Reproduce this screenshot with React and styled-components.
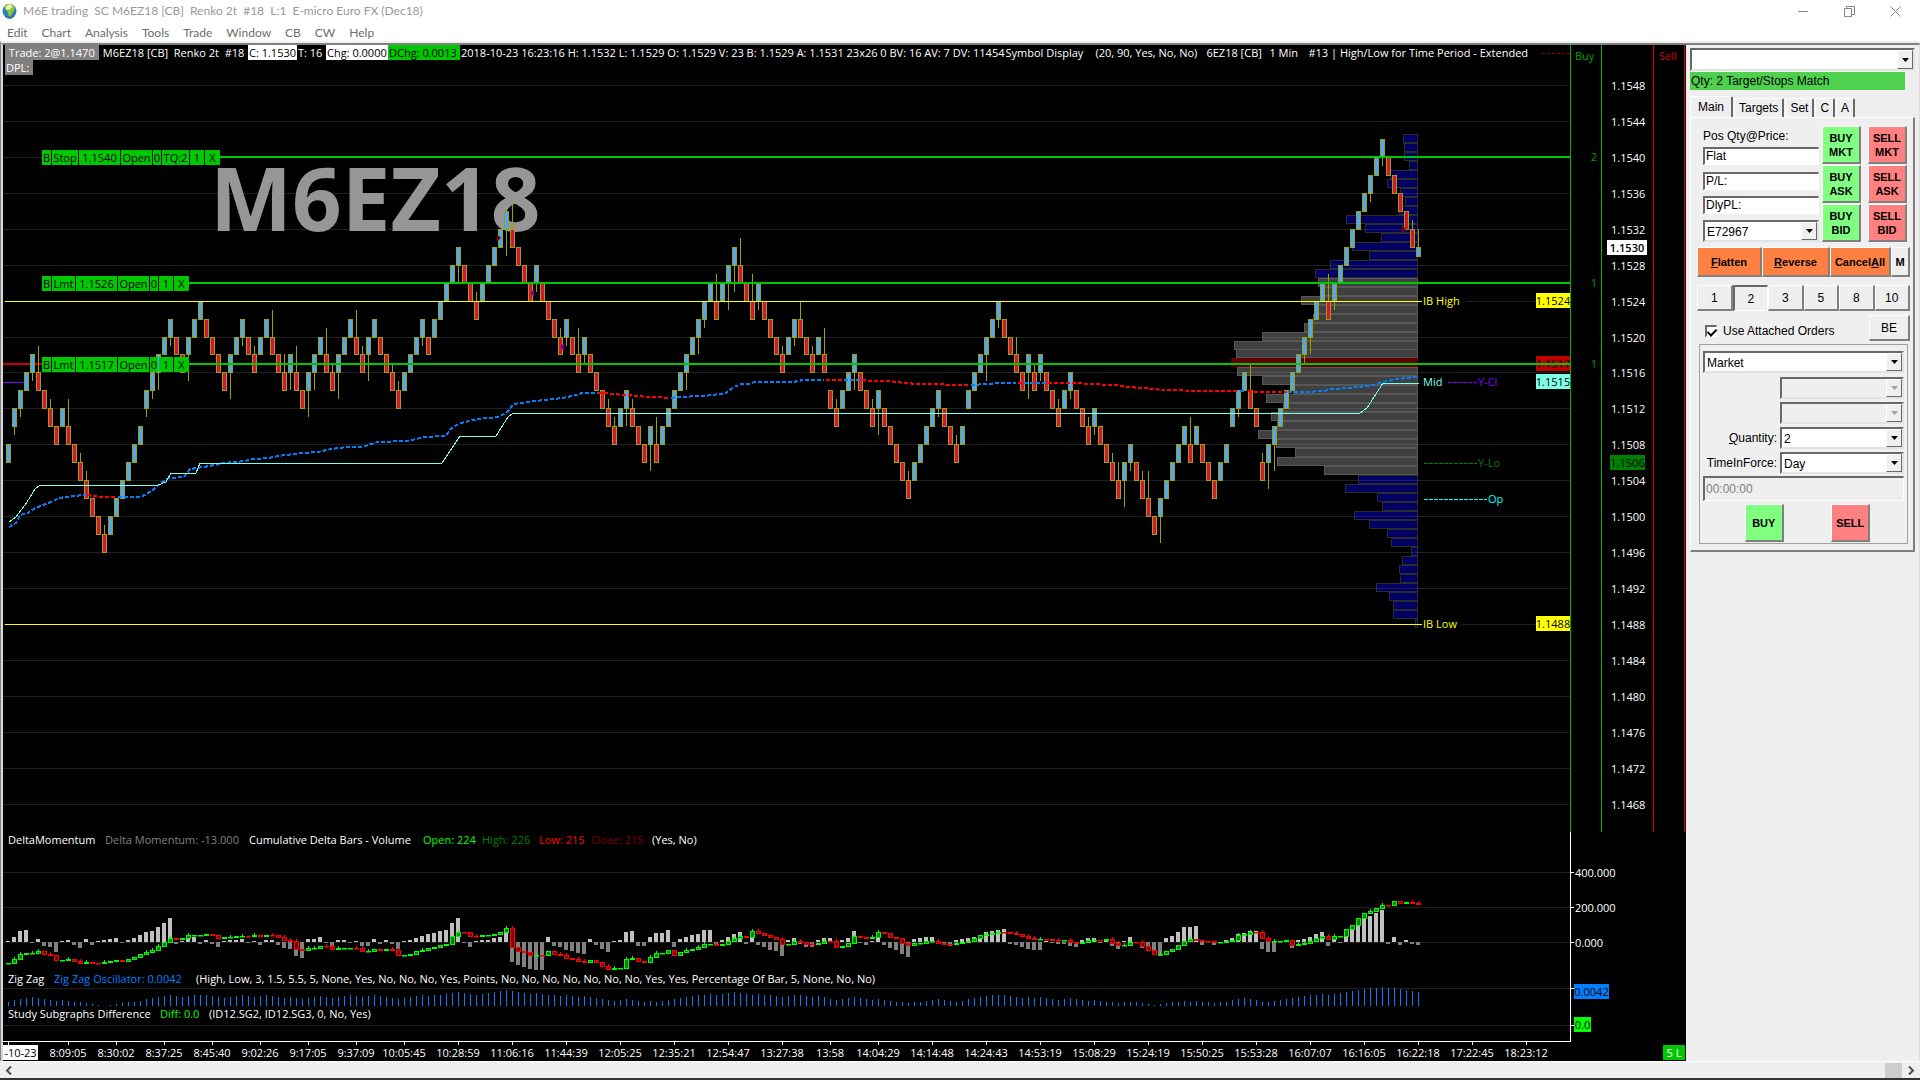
import React, { useState } from "react";
import styled, { createGlobalStyle } from "styled-components";

const UI_FONT = `"Open Sans", "Noto Sans", sans-serif`;
const BAR_FONT = `Lato, "Open Sans", sans-serif`;
const PANEL_FONT = `"Liberation Sans", Arial, sans-serif`;

// Renko bricks: direction, top price (pips over 1.1500), optional wick end
const BRICKS = `u8 u12/9 u14/11 u16 u18/15 d16/19 d14 d12/13 d10 u12 d10/13 d8 d6/7 d4/5 d2 d0 d-2/-1
u0 u2 u4 u6 u8 u10 u14/11 u16/13 u18/14 u20 u22/19 d20 d18 u20/15 u22 u24 d22 d20 d18 d16 u18/13 u20
u22/19 d20 d18/19 u20 u22 d20/23 d18 d16/18 u18/14 d16/19 d14 u16/11 u18/14 u20 d18/21 d16/17 u18/13
u20 u22 d20/23 d18/19 u20/15 u22 d20 d18 d16/17 d14/15 u16 u18 u20 u22/19 d20 u22 u24 u26 u28 u30/26
d28 d26 d24/25 u26 u28 u30 u32 u34/29 d32/35 d30 d28 d26 u28/25 d26 d24 d22 d20/21 u22/19 d20 d18/21
u20/17 d18 d16 d14 d12/13 d10/11 u12 u14/10 d12/13 d10 d8 u10/5 d8/11 u10 u12 u14 u16 u18/14 u20
u22/18 u24/21 u26 d24/27 u26 u28/23 u30/25 d28/31 d26 d24/27 u26/23 d24 d22 d20 d18/19 u20 u22/19
d22/24 d20 d18/19 u20 d18/21 d14 d12/13 u14 u16 u18/14 d16 d14 d12/13 u14/9 d12 d10 d8 d6 d4/5 u6 u8
u10 u12 u14/11 d12 d10 d8/9 u10 u14 u16 u18 u20/15 u22 u24/21 d22 d20 d18/20 d16 u18/13 d16/17 u18/15
d16 d14 d12/13 u14 u16/13 d14 d12 d10/11 u12/9 d10 d8 d6/7 d4/6 u6/1 u8/5 d6 d4/5 d2/5 d0 u2/-3 u4 u6
u8 u10 d8/11 u10 d8 d6 d4 u6 u8 u12 u14/11 u16 d14/17 d12 d6/7 u8/3 u10/5 u12 u14 u16 u18/17 u20/17
u22/18 u24 u26 d24/27 u26/23 u28 u30 u32 u34 u36 u38/35 u40 u42/39 d40 d38 d36 d34 d32/33 u30/32`
  .split(/\s+/)
  .map((s) => {
    const [body, wick] = s.slice(1).split("/");
    return { up: s[0] === "u", top: Number(body), wick: wick === undefined ? null : Number(wick) };
  });

// left edge of each volume row, from 1.1542 down to 1.1488
const PROFILE = [
  1403, 1404, 1404, 1409, 1390, 1387, 1400, 1405, 1399, 1346, 1365, 1381, 1352, 1369, 1330, 1315,
  1318, 1322, 1301, 1314, 1313, 1304, 1262, 1234, 1236, 1231, 1237, 1262, 1293, 1266, 1283, 1271,
  1277, 1258, 1276, 1295, 1277, 1324, 1358, 1345, 1377, 1382, 1354, 1369, 1387, 1391, 1411, 1402,
  1399, 1400, 1376, 1389, 1393, 1393, 1415,
];

const MOMENTUM = [
  1, 5, 11, 12, -1, 3, -4, -5, -10, 1, 2, -3, -6, 3, -3, 1, 2, 3, 4, -1, 2, 4, 7, 10, 11, 15, 19, 24,
  -2, 1, 3, 5, -2, 2, -2, -5, 1, 2, 2, 3, -1, 1, -3, 2, 2, -3, -6, -7, -14, -16, 3, 3, 5, -1, -4, 2, 2,
  -1, 1, -4, -4, 3, -2, 2, -2, -7, 1, 2, 4, 6, 8, 9, 11, 12, 19, 24, -1, -5, 1, 2, 2, 4, 5, 9, -20, -23,
  -25, -27, -28, -28, 5, -4, -5, -8, -9, -11, -12, 3, -3, -7, -10, 1, 2, 10, 11, -4, -4, 5, 9, 9, 12, -5,
  3, 5, 7, 8, 12, 12, -4, 2, 5, 8, 10, -2, 5, -3, -5, -8, -9, -14, 2, 4, -2, -5, -5, 2, 4, 4, -6, 2, 4,
  11, -1, -3, 1, 5, -3, -6, -8, -12, -15, 3, 4, 5, 5, -2, -1, -4, 2, 3, 4, 5, 7, 10, 11, 12, 13, -2, -3,
  -5, -7, -8, -8, 1, -1, -2, -2, -4, -5, 2, 4, 4, -1, 3, -4, -7, 1, 5, -1, -6, -9, -13, -14, 4, 6, 10,
  15, 15, 16, -3, 1, -3, -1, 2, 4, 8, 9, 11, 11, -7, -10, -10, 1, 2, -6, 2, 3, 5, 8, 10, -4, 4, -1, 10,
  13, 19, 26, 26, 29, 32, -2, 5, -3, 2, -2, -3,
];

const CUMULATIVE = [
  -21, -17, -12, -11, -11, -9, -12, -13, -18, -18, -17, -19, -21, -20, -21, -21, -20, -19, -18, -19,
  -17, -15, -12, -10, -8, -4, 0, 4, 3, 4, 7, 7, 7, 8, 7, 4, 5, 5, 6, 6, 6, 7, 6, 7, 7, 5, 2, 1, -7, -8,
  -6, -6, -4, -4, -7, -6, -6, -6, -6, -9, -9, -7, -8, -7, -8, -13, -13, -12, -9, -8, -6, -5, -3, -2, 6,
  10, 10, 6, 6, 7, 7, 8, 10, 14, -5, -9, -10, -13, -13, -13, -9, -12, -13, -16, -17, -19, -20, -18, -20,
  -24, -27, -26, -26, -17, -16, -19, -20, -15, -11, -11, -8, -13, -10, -8, -7, -5, -2, -2, -3, -2, 1, 4,
  6, 5, 11, 9, 7, 5, 3, -2, -2, 1, 0, -2, -2, -1, 1, 1, -5, -4, -1, 6, 5, 4, 5, 10, 9, 5, 4, -1, -3, -1,
  -1, 1, 1, -1, -2, -2, -1, 0, 1, 4, 7, 8, 9, 10, 10, 9, 8, 6, 4, 3, 3, 3, 2, 2, 2, 0, -1, 0, 2, 2, 2,
  3, -1, -3, -3, 0, 0, -4, -8, -12, -12, -9, -7, -3, 1, 3, 2, 1, 1, 0, 0, 1, 2, 7, 8, 10, 10, 4, 1, 1, 1,
  2, -3, -2, -1, 1, 4, 6, 3, 6, 6, 13, 17, 24, 29, 31, 34, 37, 37, 41, 39, 40, 39, 38,
];

const VWAP = [
  ["#0080ff", "9,527 16,523 20,515 28,513 35,508 41,506 53,501 59,498 73,496 86,495"],
  ["#f00", "87,495 94,496 102,497 116,497"],
  ["#0080ff", "118,497 141,497 153,490 161,483 169,478 184,477 190,469 204,467 224,463 245,461 253,459 269,458 278,456 294,454 300,453 318,452 331,449 347,447 363,447 371,444 378,442 408,441 424,437 445,436 453,427 461,423 469,421 478,419 498,417 506,413 514,404 527,402 563,398 576,395 582,393 598,393"],
  ["#f00", "598,393 606,393 612,394 640,396 646,397 660,397 668,398"],
  ["#0080ff", "671,398 677,397 703,396 713,395 726,393 734,387 742,384 750,384 754,382 793,382 803,380 824,380"],
  ["#f00", "826,380 842,380"],
  ["#0080ff", "844,380 860,380"],
  ["#f00", "862,380 869,381 889,381 905,383 918,384 944,384 946,385 968,385"],
  ["#0080ff", "971,385 987,384 999,383 1016,383"],
  ["#f00", "1018,383 1023,383"],
  ["#0080ff", "1024,383 1046,383"],
  ["#f00", "1048,383 1081,383 1085,384 1118,385 1126,387 1144,388 1162,390 1185,390 1187,391 1238,391"],
  ["#0080ff", "1240,391 1246,391"],
  ["#f00", "1248,391 1257,392 1287,392"],
  ["#0080ff", "1288,392 1303,392 1325,391 1330,389 1350,388 1373,385 1383,382 1397,379 1418,377"],
];

const MID_LINE =
  "9,522 16,517 27,502 35,489 40,485 158,485 166,482 171,473 196,473 200,463 442,463 460,436 496,436 508,417 513,413 1360,413 1367,408 1383,383 1419,383";

const TIMES = [
  [68, "8:09:05"], [116, "8:30:02"], [164, "8:37:25"], [212, "8:45:40"], [260, "9:02:26"],
  [308, "9:17:05"], [356, "9:37:09"], [404, "10:05:45"], [458, "10:28:59"], [512, "11:06:16"],
  [566, "11:44:39"], [620, "12:05:25"], [674, "12:35:21"], [728, "12:54:47"], [782, "13:27:38"],
  [830, "13:58"], [878, "14:04:29"], [932, "14:14:48"], [986, "14:24:43"], [1040, "14:53:19"],
  [1094, "15:08:29"], [1148, "15:24:19"], [1202, "15:50:25"], [1256, "15:53:28"], [1310, "16:07:07"],
  [1364, "16:16:05"], [1418, "16:22:18"], [1472, "17:22:45"], [1526, "18:23:12"],
];

const ORDERS = [
  { y: 157, cells: [[42, 9, "B"], [52, 26, "Stop"], [79, 41, "1.1540"], [121, 31, "Open"], [153, 8, "0"], [162, 27, "TQ:2"], [190, 14, "1"], [205, 15, "X"]] },
  { y: 283, cells: [[42, 9, "B"], [52, 23, "Lmt"], [76, 41, "1.1526"], [118, 31, "Open"], [150, 8, "0"], [159, 14, "1"], [174, 15, "X"]] },
  { y: 364, cells: [[42, 9, "B"], [52, 23, "Lmt"], [76, 41, "1.1517"], [118, 31, "Open"], [150, 8, "0"], [159, 14, "1"], [174, 15, "X"]] },
];

const LEVELS = Array.from({ length: 21 }, (_, i) => 48 - i * 4);
const barX = (i) => 8 + i * 6;
const priceY = (t) => Math.round(85 + (48 - t) * 8.983);
const priceText = (t) => (1.15 + t / 10000).toFixed(4);

const Tag = ({ x, y, w, fill, color = "#000", bold, children }) => (
  <g>
    <rect x={x} y={y} width={w} height="15" fill={fill} />
    <ChartText x={x + w / 2} y={y + 12} textAnchor="middle" fill={color} $bold={bold}>{children}</ChartText>
  </g>
);

const Profile = () =>
  PROFILE.map((left, i) => {
    const t = 42 - i;
    const y = priceY(t);
    const blue = t > 26 || t < 5;
    if (t === 17) return <rect key={t} x={left} y={y - 5} width={1418 - left} height="9" fill="#600000" />;
    return (
      <g key={t}>
        <rect x={left + 0.5} y={y - 4.5} width={1417 - left} height="8"
          fill={blue ? "#000064" : "#404040"} stroke={blue ? "#2c2c2c" : "#585858"} />
        {t % 4 === 0 && <rect x={left} y={y} width={1418 - left} height="1" fill="#fff" opacity="0.1" />}
      </g>
    );
  });

const Bricks = () =>
  BRICKS.map((b, i) => {
    const x = barX(i);
    const y = priceY(b.top);
    const h = i === BRICKS.length - 1 ? 9 : priceY(b.top - 2) - y;
    return (
      <g key={i}>
        {b.wick !== null && (
          <path d={`M${x + 0.5} ${b.wick > b.top ? y : y + h}V${priceY(b.wick)}`} stroke="#a0a000" />
        )}
        <rect x={x - 1.5} y={y + 0.5} width="4" height={h} fill={b.up ? "#4da6ff" : "#d4143c"} stroke="#a0a000" />
      </g>
    );
  });

const PricePlot = () => (
  <Plot viewBox="3 75 1567 757" preserveAspectRatio="xMaxYMin meet">
    {LEVELS.map((t) => <rect key={t} x="3" y={priceY(t)} width="1567" height="1" fill="#202020" />)}
    <Watermark x="210" y="231">M6EZ18</Watermark>
    <Profile />
    <rect x="3" y="363" width="40" height="2" fill="#c80000" />
    <rect x="3" y="382" width="22" height="1" fill="#8000ff" />
    <Bricks />
    <path d="M497 234v8l4-4zM1402 225v8l4-4z" fill="#800000" />
    <path d="M534 289v8l-4-4zM564 343v8l-4-4z" fill="#800080" />
    <rect x="5" y="301" width="1417" height="1" fill="#ff0" />
    <rect x="5" y="624" width="1417" height="1" fill="#ff0" />
    {VWAP.map(([color, points]) => (
      <polyline key={points} points={points} fill="none" stroke={color} strokeWidth="2" strokeDasharray="4 2" shapeRendering="crispEdges" />
    ))}
    <polyline points={MID_LINE} fill="none" stroke="#80ffe8" shapeRendering="crispEdges" />
    <rect x="1422" y="296" width="44" height="10" fill="#000" />
    <rect x="1422" y="619" width="40" height="10" fill="#000" />
    <ChartText x="1423" y="305" fill="#ff0">IB High</ChartText>
    <ChartText x="1423" y="386" fill="#80ffe8">Mid</ChartText>
    <path d="M1448 382.500h30" stroke="#8000ff" strokeDasharray="4 1" />
    <ChartText x="1478" y="386" fill="#8000ff">Y-Cl</ChartText>
    <path d="M1424 463.500h53" stroke="#008000" strokeDasharray="4 1" />
    <ChartText x="1478" y="467" fill="#008000">Y-Lo</ChartText>
    <path d="M1424 499.500h63" stroke="#0ff" strokeDasharray="4 1" />
    <ChartText x="1488" y="503" fill="#0ff">Op</ChartText>
    <ChartText x="1423" y="628" fill="#ff0">IB Low</ChartText>
    <Tag x={1536} y={293} w={34} fill="#ff0">1.1524</Tag>
    <Tag x={1536} y={356} w={34} fill="#c00000">1.1517</Tag>
    <Tag x={1536} y={374} w={34} fill="#80ffe8">1.1515</Tag>
    <Tag x={1536} y={616} w={34} fill="#ff0">1.1488</Tag>
    {ORDERS.map((o) => {
      const last = o.cells[o.cells.length - 1];
      return (
        <g key={o.y}>
          <rect x={last[0] + last[1]} y={o.y - 1} width={1570 - last[0] - last[1]} height="2" fill="#00c800" />
          {o.cells.map(([x, w, text]) => <Tag key={x} x={x} y={o.y - 7} w={w} fill="#00c800">{text}</Tag>)}
        </g>
      );
    })}
  </Plot>
);

const PriceLadder = () => (
  <Ladder viewBox="1570 45 116 787">
    <path d="M1570.500 45v787M1601.500 45v787" stroke="#00b400" />
    <path d="M1653.500 45v787M1684.500 45v787" stroke="#e00000" />
    <ChartText x="1575" y="60" fill="#00a000">Buy</ChartText>
    <ChartText x="1659" y="60" fill="#d00000">Sell</ChartText>
    <ChartText x="1597" y="161" textAnchor="end" fill="#00a000">2</ChartText>
    <ChartText x="1597" y="287" textAnchor="end" fill="#00a000">1</ChartText>
    <ChartText x="1597" y="368" textAnchor="end" fill="#00a000">1</ChartText>
    {LEVELS.map((t) => (
      <ChartText key={t} x="1611" y={priceY(t) + 5} fill="#fff">{priceText(t)}</ChartText>
    ))}
    <Tag x={1607} y={240} w={40} fill="#fff" bold>1.1530</Tag>
    <Tag x={1610} y={455} w={35} fill="#008000">1.1506</Tag>
  </Ladder>
);

const Studies = () => (
  <StudyPlot viewBox="3 832 1683 229" preserveAspectRatio="xMaxYMin meet">
    {[872, 907, 942, 988, 1025].map((y) => (
      <g key={y}>
        <rect x="3" y={y} width="1567" height="1" fill="#202020" />
        <rect x="1571" y={y} width="3" height="1" fill="#fff" />
      </g>
    ))}
    {MOMENTUM.map((m, i) => (
      <rect key={i} x={barX(i) - 2} y={m > 0 ? 942 - m : 942} width="4" height={Math.abs(m)} fill={m > 0 ? "#c0c0c0" : "#808080"} />
    ))}
    {CUMULATIVE.map((c, i) => {
      const open = i ? CUMULATIVE[i - 1] : c;
      const up = i ? c > open || (c === open && BRICKS[i].up) : true;
      const top = 942 - Math.max(c, open);
      const h = Math.abs(c - open);
      return (
        <g key={i} fill={up ? "#008000" : "#800000"} stroke={up ? "#0f0" : "#f00"}>
          {BRICKS[i].wick !== null && <path d={`M${barX(i) + 0.5} ${top - 2}v3`} />}
          <rect x={barX(i) - 1.5} y={top + 0.5} width="4" height={h || 0.5} />
        </g>
      );
    })}
    {BRICKS.map((b, i) => {
      const h = Math.round((b.top + 2) * 0.44);
      return <rect key={i} x={barX(i)} y={1006 - h} width="1" height={h} fill="#0080ff" />;
    })}
    <path d="M1570.500 832v209.500M3 1041.500h1568" stroke="#fff" />
    <rect x="8" y="1041" width="1" height="4" fill="#fff" />
    {TIMES.map(([x, text]) => (
      <g key={x} fill="#fff">
        <rect x={x} y="1041" width="1" height="4" />
        <ChartText x={x} y="1057" textAnchor="middle">{text}</ChartText>
      </g>
    ))}
    <Tag x={3} y={1045} w={35} fill="#fff">-10-23</Tag>
    <ChartText x="8" y="844" fill="#fff">DeltaMomentum</ChartText>
    <ChartText x="105" y="844" fill="#808080">Delta Momentum: -13.000</ChartText>
    <ChartText x="249" y="844" fill="#fff">Cumulative Delta Bars - Volume</ChartText>
    <ChartText x="423" y="844" fill="#0f0">Open: 224</ChartText>
    <ChartText x="482" y="844" fill="#008000">High: 226</ChartText>
    <ChartText x="539" y="844" fill="#f00">Low: 215</ChartText>
    <ChartText x="591" y="844" fill="#800000">Close: 215</ChartText>
    <ChartText x="652" y="844" fill="#fff">(Yes, No)</ChartText>
    <ChartText x="8" y="983" fill="#fff">Zig Zag</ChartText>
    <ChartText x="54" y="983" fill="#0080ff">Zig Zag Oscillator: 0.0042</ChartText>
    <ChartText x="196" y="983" fill="#fff">(High, Low, 3, 1.5, 5.5, 5, None, Yes, No, No, No, Yes, Points, No, No, No, No, No, No, No, Yes, Yes, Percentage Of Bar, 5, None, No, No)</ChartText>
    <ChartText x="8" y="1018" fill="#fff">Study Subgraphs Difference</ChartText>
    <ChartText x="160" y="1018" fill="#0f0">Diff: 0.0</ChartText>
    <ChartText x="209" y="1018" fill="#fff">(ID12.SG2, ID12.SG3, 0, No, Yes)</ChartText>
    <ChartText x="1575" y="877" fill="#fff">400.000</ChartText>
    <ChartText x="1575" y="912" fill="#fff">200.000</ChartText>
    <ChartText x="1575" y="947" fill="#fff">0.000</ChartText>
    <Tag x={1574} y={984} w={35} fill="#0080ff">0.0042</Tag>
    <Tag x={1574} y={1017} w={17} fill="#0f0">0.0</Tag>
    <Tag x={1663} y={1045} w={22} fill="#00c800" color="#fff">5 L</Tag>
  </StudyPlot>
);

const Combo = ({ options, label, id, disabled, tall }) => (
  <ComboBox $disabled={disabled} $tall={tall}>
    <select id={id} aria-label={label} disabled={disabled}>
      {options.map((o) => <option key={o}>{o}</option>)}
    </select>
    <Arrow $disabled={disabled}>
      <svg width="7" height="4" viewBox="0 0 7 4"><path d="M0 0h7L3.500 4z" /></svg>
    </Arrow>
  </ComboBox>
);

const TradePanel = () => {
  const [qty, setQty] = useState(2);
  const [attached, setAttached] = useState(true);
  return (
    <Side>
      <Combo label="Trade configuration" options={[""]} />
      <Status>Qty: 2 Target/Stops Match</Status>
      <Tabs role="tablist">
        <Tab role="tab" aria-selected="true" $active>Main</Tab>
        <Tab role="tab">Targets</Tab>
        <Tab role="tab">Set</Tab>
        <Tab role="tab">C</Tab>
        <Tab role="tab">A</Tab>
      </Tabs>
      <Page>
        <TopGrid>
          <Fields>
            <label htmlFor="pos">Pos Qty@Price:</label>
            <Field id="pos" readOnly value="Flat" />
            <Field aria-label="Profit and loss" readOnly value="P/L:" />
            <Field aria-label="Daily profit and loss" readOnly value="DlyPL:" />
            <Combo label="Account" options={["E72967"]} tall />
          </Fields>
          <Quick>
            {["MKT", "ASK", "BID"].map((k) => (
              <React.Fragment key={k}>
                <TradeButton $color="#80ff80">BUY<br />{k}</TradeButton>
                <TradeButton $color="#ff8080">SELL<br />{k}</TradeButton>
              </React.Fragment>
            ))}
          </Quick>
        </TopGrid>
        <ActionRow>
          <ActionButton><u>F</u>latten</ActionButton>
          <ActionButton><u>R</u>everse</ActionButton>
          <ActionButton>Cancel<u>A</u>ll</ActionButton>
          <ActionButton $plain>M</ActionButton>
        </ActionRow>
        <QtyRow>
          {[1, 2, 3, 5, 8, 10].map((n) => (
            <QtyButton key={n} $pressed={n === qty} onClick={() => setQty(n)}>{n}</QtyButton>
          ))}
        </QtyRow>
        <AttachRow>
          <CheckLabel>
            <Check type="checkbox" checked={attached} onChange={() => setAttached(!attached)} />
            Use Attached Orders
          </CheckLabel>
          <QtyButton>BE</QtyButton>
        </AttachRow>
        <OrderBox>
          <Combo label="Order type" options={["Market"]} tall />
          <OrderGrid>
            <span />
            <Combo label="Price" options={[""]} disabled tall />
            <span />
            <Combo label="Second price" options={[""]} disabled tall />
            <label htmlFor="quantity"><u>Q</u>uantity:</label>
            <Combo id="quantity" options={["2"]} tall />
            <label htmlFor="tif">TimeInForce:</label>
            <Combo id="tif" options={["Day"]} tall />
          </OrderGrid>
          <Field aria-label="Good till time" disabled value="00:00:00" $large />
          <SendRow>
            <TradeButton $color="#80ff80">BUY</TradeButton>
            <TradeButton $color="#ff8080">SELL</TradeButton>
          </SendRow>
        </OrderBox>
      </Page>
    </Side>
  );
};

const App = () => (
  <>
    <GlobalStyle />
    <Window>
      <TitleBar>
        <svg width="16" height="18" viewBox="0 0 16 18">
          <circle cx="7.500" cy="9" r="7" fill="#2b7fc0" />
          <path d="M3 4C5 1 10 1 12 4c2 4-1 5-2 8-2 4-4 2-4-1 0-3-5-3-3-7z" fill="#8fc63a" />
          <path d="M4 5c2-3 5-3 6-1 0 2-3 5-6 3z" fill="#e9f7b5" />
          <path d="M3 14c3 3 7 3 9 0" stroke="#123f6b" fill="none" />
        </svg>
        <h1>M6E trading&nbsp; SC M6EZ18 [CB]&nbsp; Renko 2t&nbsp; #18&nbsp; L:1&nbsp; E-micro Euro FX (Dec18)</h1>
        <WindowButton aria-label="Minimize"><svg width="11" height="11"><path d="M0 5.500h10" /></svg></WindowButton>
        <WindowButton aria-label="Restore"><svg width="11" height="11"><path d="M.5 2.500h7v8h-7zM2.500 2.500v-2h8v8h-3" /></svg></WindowButton>
        <WindowButton aria-label="Close"><svg width="11" height="11"><path d="M.5.5l10 10M10.500.5l-10 10" /></svg></WindowButton>
      </TitleBar>
      <Menu>
        {["Edit", "Chart", "Analysis", "Tools", "Trade", "Window", "CB", "CW", "Help"].map((m) => (
          <button key={m}>{m}</button>
        ))}
      </Menu>
      <Workspace>
        <Chart>
          <Upper>
            <Main>
              <Header>
                <Row>
                  <Info $w={94} $bg="#808080">&nbsp;Trade: 2@1.1470</Info>
                  <Info $w={149}>&nbsp;M6EZ18 [CB]&nbsp; Renko 2t&nbsp; #18</Info>
                  <Info $w={49} $bg="#fff" $color="#000">C: 1.1530</Info>
                  <Info $w={29}>T: 16</Info>
                  <Info $w={62} $bg="#fff" $color="#000">Chg: 0.0000</Info>
                  <Info $w={72} $bg="#00c800" $color="#000">DChg: 0.0013</Info>
                  <Info $w={544}>2018-10-23 16:23:16 H: 1.1532 L: 1.1529 O: 1.1529 V: 23 B: 1.1529 A: 1.1531 23x26 0 BV: 16 AV: 7 DV: 11454</Info>
                  <Info $w={90}>Symbol Display</Info>
                  <Info $w={111}>(20, 90, Yes, No, No)</Info>
                  <Info $w={63}>6EZ18 [CB]</Info>
                  <Info $w={39}>1 Min</Info>
                  <Info $w={231}>#13 | High/Low for Time Period - Extended</Info>
                  <Dashes />
                </Row>
                <Row><Info $w={28} $bg="#808080">DPL:</Info></Row>
              </Header>
              <PricePlot />
            </Main>
            <PriceLadder />
          </Upper>
          <Studies />
        </Chart>
        <TradePanel />
      </Workspace>
      <ScrollBar>
        <button aria-label="Scroll left"><svg width="8" height="9"><path d="M6 .5l-4 4 4 4" /></svg></button>
        <Thumb />
        <button aria-label="Scroll right"><svg width="8" height="9"><path d="M2 .5l4 4-4 4" /></svg></button>
      </ScrollBar>
    </Window>
  </>
);

const GlobalStyle = createGlobalStyle`
* { box-sizing: border-box; }
body { margin: 0; background: #333; }
button, input, select { font: inherit; color: inherit; padding: 0; margin: 0; }
svg { display: block; }
`
const Window = styled.div`
display: flex;
flex-direction: column;
min-height: 100vh;
background: #fff;
border-bottom: 2px solid #333;
font-family: ${UI_FONT};
font-size: 11px;
`
const TitleBar = styled.header`
display: flex;
align-items: center;
height: 22px;
padding: 0 4px 0 2px;
gap: 5px;
h1 {
  flex: 1;
  margin: 0;
  color: #999;
  font-family: ${BAR_FONT};
  font-size: 12px;
  font-weight: normal;
  line-height: 20px;
  white-space: nowrap;
}
`
const WindowButton = styled.button`
display: flex;
align-items: center;
justify-content: center;
width: 41px;
height: 20px;
border: none;
background: none;
path {
  fill: none;
  stroke: #888;
}
`
const Menu = styled.nav`
display: flex;
height: 19px;
button {
  padding: 0 7px;
  border: none;
  background: none;
  color: #6d6d6d;
  font-family: ${BAR_FONT};
  font-size: 12px;
  line-height: 21px;
}
`
const Workspace = styled.main`
display: flex;
flex: 1;
border-top: 2px solid #efefef;
border-left: 1px solid #808080;
background: #efefef;
`
const Chart = styled.section`
flex: 1;
min-width: 0;
border-top: 2px solid #808080;
border-left: 2px solid #d8d8d8;
background: #000;
`
const Upper = styled.div`
display: flex;
`
const Main = styled.div`
flex: 1;
min-width: 0;
`
const Header = styled.div`
height: 30px;
padding-left: 2px;
overflow: hidden;
`
const Row = styled.div`
display: flex;
height: 15px;
`
const Info = styled.span`
flex: 0 0 ${(p) => p.$w}px;
padding-left: 1px;
background: ${(p) => p.$bg || "transparent"};
color: ${(p) => p.$color || "#fff"};
line-height: 15px;
white-space: nowrap;
`
const Dashes = styled.i`
flex: 1;
height: 9px;
margin-left: 4px;
border-bottom: 1px dashed #900000;
`
const Plot = styled.svg`
width: 100%;
height: 757px;
`
const Ladder = styled.svg`
flex: none;
width: 116px;
height: 787px;
`
const StudyPlot = styled.svg`
width: 100%;
height: 229px;
`
const ChartText = styled.text`
font-family: ${UI_FONT};
font-size: 11px;
font-weight: ${(p) => (p.$bold ? 600 : 400)};
white-space: pre;
`
const Watermark = styled.text`
font-family: ${UI_FONT};
font-size: 87px;
font-weight: 700;
fill: #969696;
`
const Side = styled.aside`
flex: none;
width: 234px;
padding: 3px 4px 0 4px;
border-top: 2px solid #808080;
border-right: 1px solid #ddd;
font-family: ${PANEL_FONT};
font-size: 12px;
color: #000;
`
const ComboBox = styled.div`
position: relative;
height: ${(p) => (p.$tall ? 22 : 23)}px;
border: 2px solid;
border-color: #696969 #e3e3e3 #e3e3e3 #696969;
background: ${(p) => (p.$disabled ? "#efefef" : "#fff")};
select {
  width: 100%;
  height: 100%;
  padding: 2px 0 0 2px;
  border: none;
  outline: none;
  background: none;
  appearance: none;
}
`
const Arrow = styled.span`
position: absolute;
top: 0;
right: 0;
bottom: 0;
width: 16px;
display: flex;
align-items: center;
justify-content: center;
border: 1px solid;
border-color: #fff #696969 #696969 #fff;
background: #efefef;
pointer-events: none;
path {
  fill: ${(p) => (p.$disabled ? "#a0a0a0" : "#000")};
}
`
const Status = styled.div`
height: 18px;
margin: 1px 10px 0 0;
padding-left: 1px;
background: #4fd14f;
line-height: 19px;
`
const Tabs = styled.div`
display: flex;
align-items: flex-end;
height: 21px;
margin-top: 6px;
`
const Tab = styled.button`
height: ${(p) => (p.$active ? 21 : 19)}px;
margin-right: 1px;
padding: 0 ${(p) => (p.$active ? 7 : 4)}px;
border: solid;
border-width: 1px 2px 0 1px;
border-color: #fff #696969 #efefef #fff;
border-radius: 2px 2px 0 0;
background: #efefef;
`
const Page = styled.div`
padding: 8px 3px 6px 6px;
border: solid;
border-width: 1px 2px 2px 1px;
border-color: #fff #808080 #808080 #fff;
`
const TopGrid = styled.div`
display: grid;
grid-template-columns: 116px 1fr;
gap: 3px;
padding: 0 3px 0 6px;
`
const Fields = styled.div`
display: flex;
flex-direction: column;
justify-content: space-between;
padding-top: 3px;
label {
  height: 12px;
  line-height: 14px;
}
`
const Field = styled.input`
width: 100%;
height: ${(p) => (p.$large ? 25 : 18)}px;
padding: 0 0 1px 1px;
border: solid;
border-width: 2px 1px 1px 2px;
border-color: #696969 #fff #fff #696969;
background: ${(p) => (p.disabled ? "#efefef" : "#fff")};
color: ${(p) => (p.disabled ? "#808080" : "#000")};
outline: none;
`
const Quick = styled.div`
display: grid;
grid-template-columns: 39px 39px;
justify-content: space-between;
gap: 1px;
`
const TradeButton = styled.button`
width: 39px;
height: 38px;
border: solid;
border-width: 1px 2px 2px 1px;
border-color: #fff #808080 #808080 #fff;
background: ${(p) => p.$color};
font-size: 11px;
font-weight: bold;
line-height: 14px;
`
const ActionRow = styled.div`
display: grid;
grid-template-columns: 65px 68px 1fr 19px;
margin-top: 5px;
`
const ActionButton = styled.button`
height: 30px;
border: solid;
border-width: 1px 2px 2px 1px;
border-color: #fff #808080 #808080 #fff;
background: ${(p) => (p.$plain ? "#efefef" : "#ff8040")};
font-size: 11px;
font-weight: bold;
`
const QtyRow = styled.div`
display: grid;
grid-template-columns: repeat(6, 1fr);
margin-top: 8px;
`
const QtyButton = styled.button`
height: 26px;
border: solid;
border-width: ${(p) => (p.$pressed ? "2px 1px 1px 2px" : "1px 2px 2px 1px")};
border-color: ${(p) => (p.$pressed ? "#696969 #fff #fff #696969" : "#fff #808080 #808080 #fff")};
background: #efefef;
`
const AttachRow = styled.div`
display: grid;
grid-template-columns: 1fr 41px;
margin-top: 4px;
`
const CheckLabel = styled.label`
display: flex;
align-items: center;
gap: 6px;
padding: 6px 0 0 8px;
`
const Check = styled.input`
appearance: none;
width: 12px;
height: 12px;
border: solid;
border-width: 2px 1px 1px 2px;
border-color: #696969 #fff #fff #696969;
background: #fff;
&:checked::before {
  content: "";
  display: block;
  width: 4px;
  height: 7px;
  margin-left: 2px;
  border: solid #000;
  border-width: 0 2px 2px 0;
  transform: rotate(45deg);
}
`
const OrderBox = styled.div`
margin: 3px 2px 0 2px;
padding: 6px 3px 1px 3px;
border: 1px solid #a0a0a0;
`
const OrderGrid = styled.div`
display: grid;
grid-template-columns: 1fr 124px;
align-items: center;
gap: 3px;
margin: 4px 0 2px;
text-align: right;
`
const SendRow = styled.div`
display: flex;
justify-content: space-around;
gap: 4px;
padding: 3px 12px 0 20px;
`
const ScrollBar = styled.footer`
display: flex;
align-items: center;
height: 17px;
border-top: 1px solid #fff;
background: #efefef;
button {
  width: 18px;
  padding-left: 5px;
  border: none;
  background: none;
}
path {
  fill: none;
  stroke: #505050;
  stroke-width: 2;
}
`
const Thumb = styled.div`
width: 17px;
height: 15px;
margin-left: auto;
background: #cdcdcd;
`
export default App;
